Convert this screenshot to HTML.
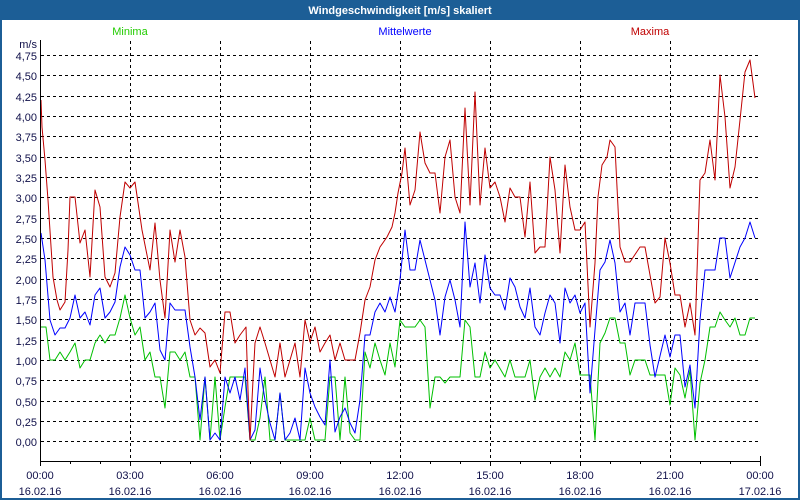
<!DOCTYPE html>
<html><head><meta charset="utf-8"><style>
html,body{margin:0;padding:0;width:800px;height:500px;overflow:hidden;background:#fff}
svg{display:block}
text{font-family:"Liberation Sans",sans-serif;font-size:11px}
</style></head><body>
<svg width="800" height="500" viewBox="0 0 800 500" xmlns="http://www.w3.org/2000/svg">
<rect x="0" y="0" width="800" height="500" fill="#1c5e96"/>
<rect x="2" y="20" width="796" height="478" fill="#fff"/>
<text x="400" y="14" text-anchor="middle" fill="#fff" font-weight="bold" style="font-size:11px">Windgeschwindigkeit [m/s] skaliert</text>
<text x="130" y="35" text-anchor="middle" fill="#22cc00">Minima</text>
<text x="405" y="35" text-anchor="middle" fill="#0000ff">Mittelwerte</text>
<text x="650" y="35" text-anchor="middle" fill="#c00000">Maxima</text>
<g fill="#10104a" text-anchor="end">
<text x="37" y="48">m/s</text>
<text x="37" y="60">4,75</text><text x="37" y="80">4,50</text><text x="37" y="101">4,25</text><text x="37" y="121">4,00</text>
<text x="37" y="141">3,75</text><text x="37" y="162">3,50</text><text x="37" y="182">3,25</text><text x="37" y="202">3,00</text>
<text x="37" y="223">2,75</text><text x="37" y="243">2,50</text><text x="37" y="263">2,25</text><text x="37" y="284">2,00</text>
<text x="37" y="304">1,75</text><text x="37" y="324">1,50</text><text x="37" y="345">1,25</text><text x="37" y="365">1,00</text>
<text x="37" y="385">0,75</text><text x="37" y="406">0,50</text><text x="37" y="426">0,25</text><text x="37" y="446">0,00</text>
</g>
<g stroke="#000" stroke-width="1" stroke-dasharray="3,3" shape-rendering="crispEdges">
<line x1="41" x2="760" y1="55.5" y2="55.5"/><line x1="41" x2="760" y1="75.5" y2="75.5"/><line x1="41" x2="760" y1="96.5" y2="96.5"/><line x1="41" x2="760" y1="116.5" y2="116.5"/>
<line x1="41" x2="760" y1="136.5" y2="136.5"/><line x1="41" x2="760" y1="157.5" y2="157.5"/><line x1="41" x2="760" y1="177.5" y2="177.5"/><line x1="41" x2="760" y1="197.5" y2="197.5"/>
<line x1="41" x2="760" y1="218.5" y2="218.5"/><line x1="41" x2="760" y1="238.5" y2="238.5"/><line x1="41" x2="760" y1="258.5" y2="258.5"/><line x1="41" x2="760" y1="279.5" y2="279.5"/>
<line x1="41" x2="760" y1="299.5" y2="299.5"/><line x1="41" x2="760" y1="319.5" y2="319.5"/><line x1="41" x2="760" y1="340.5" y2="340.5"/><line x1="41" x2="760" y1="360.5" y2="360.5"/>
<line x1="41" x2="760" y1="380.5" y2="380.5"/><line x1="41" x2="760" y1="401.5" y2="401.5"/><line x1="41" x2="760" y1="421.5" y2="421.5"/><line x1="41" x2="760" y1="441.5" y2="441.5"/>
<line y1="41" y2="461" x1="130.5" x2="130.5"/><line y1="41" y2="461" x1="220.5" x2="220.5"/><line y1="41" y2="461" x1="310.5" x2="310.5"/><line y1="41" y2="461" x1="400.5" x2="400.5"/>
<line y1="41" y2="461" x1="490.5" x2="490.5"/><line y1="41" y2="461" x1="580.5" x2="580.5"/><line y1="41" y2="461" x1="670.5" x2="670.5"/>
</g>
<g fill="none" stroke-width="1" stroke-linejoin="round">
<polyline stroke="#00c000" points="41,327 46,327 50,360 55,360 60,352 65,360 70,352 75,343 80,368 85,360 90,360 95,343 100,335 105,343 110,335 115,335 120,318 125,295 130,318 135,335 140,327 145,360 150,352 155,377 160,377 165,408 170,352 175,352 180,360 185,352 190,377 195,377 200,440 205,377 210,440 215,377 220,440 225,407 230,377 245,377 250,440 255,440 260,418 265,377 270,440 275,440 280,393 285,440 300,440 305,440 310,418 315,440 325,440 330,377 335,377 340,440 345,377 350,433 355,440 360,440 365,352 370,368 375,343 380,360 385,375 390,343 395,367 400,320 405,327 415,327 420,320 425,327 430,408 435,377 440,377 445,383 450,377 460,377 465,320 470,327 475,377 480,377 485,352 490,368 495,360 505,377 510,360 515,377 525,377 530,360 535,400 540,377 545,368 550,377 555,368 560,377 565,352 570,360 575,343 580,375 590,375 595,440 600,343 605,333 610,318 615,318 620,343 625,343 630,375 635,360 645,360 650,375 665,375 670,405 675,368 680,375 685,398 690,370 695,440 700,383 705,360 710,327 715,327 720,312 725,320 730,327 735,318 740,335 745,335 750,318 755,318"/>
<polyline stroke="#0000ff" points="41,233 45,260 50,320 55,335 60,328 65,328 70,318 75,295 80,318 85,312 90,325 95,295 100,288 105,318 110,312 115,302 120,267 125,247 130,255 135,270 140,270 145,318 150,312 155,303 160,350 165,360 170,303 175,310 185,310 190,347 195,377 200,420 205,377 210,440 215,433 220,440 225,377 230,393 235,377 240,400 245,368 250,440 255,430 260,368 265,400 270,423 275,440 280,393 285,440 290,433 295,418 300,440 305,368 310,393 315,407 320,417 325,425 330,360 335,432 340,417 345,408 350,423 355,433 360,400 365,335 370,335 375,312 380,303 385,312 390,297 395,312 400,280 405,230 410,270 415,270 420,240 425,260 430,280 435,300 440,335 445,297 450,280 455,300 460,327 465,222 470,287 475,263 480,303 485,255 490,288 495,295 500,295 505,310 510,278 515,287 520,307 525,318 530,288 535,327 540,335 545,313 550,295 555,303 560,343 565,288 570,303 575,295 580,313 585,303 590,393 595,330 600,270 605,262 610,240 615,263 620,312 625,303 630,335 635,303 645,303 650,345 655,377 665,335 670,357 675,335 680,335 685,387 690,365 695,408 700,320 705,270 715,270 720,238 725,238 730,278 740,247 745,238 750,222 755,238"/>
<polyline stroke="#c00000" points="41,100 42,127 45,160 48,200 53,277 57,300 60,310 65,302 68,250 70,197 75,197 80,243 85,230 90,277 95,190 100,207 105,277 110,287 115,273 120,217 125,182 130,188 135,182 142,230 150,270 155,223 160,280 165,318 170,230 175,262 180,230 185,257 190,320 195,335 200,328 205,333 210,367 215,360 220,373 225,312 230,312 235,343 240,335 246,327 248,390 250,440 253,380 255,343 260,327 265,343 270,360 275,377 280,343 285,377 290,360 295,343 300,377 305,320 310,342 315,327 320,352 325,343 330,335 335,360 340,343 345,360 355,360 360,333 365,300 370,287 375,260 380,247 387,237 392,227 395,213 398,193 402,173 405,148 410,205 415,190 420,132 425,163 430,173 435,173 440,213 445,157 450,140 455,197 460,213 465,108 470,205 475,92 480,205 485,148 490,188 495,182 500,197 505,222 510,188 515,197 520,197 525,237 530,182 535,253 540,247 545,247 550,157 555,190 560,253 565,165 570,207 575,230 580,230 585,222 590,327 595,263 598,197 602,165 607,157 610,140 615,147 620,247 625,262 630,262 640,247 645,247 655,303 660,297 665,238 670,263 675,295 680,295 685,327 690,303 695,335 700,180 705,173 710,140 715,180 720,75 725,117 730,188 735,167 740,120 745,72 750,60 755,98"/>
</g>
<g stroke="#000" stroke-width="1" shape-rendering="crispEdges">
<line x1="40.5" y1="40" x2="40.5" y2="462"/>
<line x1="40" y1="461.5" x2="761" y2="461.5"/>
<line x1="760.5" y1="456" x2="760.5" y2="466"/>
<line x1="40.5" y1="461" x2="40.5" y2="466"/>
<line x1="70.5" y1="461" x2="70.5" y2="464"/><line x1="100.5" y1="461" x2="100.5" y2="464"/><line x1="130.5" y1="461" x2="130.5" y2="466"/>
<line x1="160.5" y1="461" x2="160.5" y2="464"/><line x1="190.5" y1="461" x2="190.5" y2="464"/><line x1="220.5" y1="461" x2="220.5" y2="466"/>
<line x1="250.5" y1="461" x2="250.5" y2="464"/><line x1="280.5" y1="461" x2="280.5" y2="464"/><line x1="310.5" y1="461" x2="310.5" y2="466"/>
<line x1="340.5" y1="461" x2="340.5" y2="464"/><line x1="370.5" y1="461" x2="370.5" y2="464"/><line x1="400.5" y1="461" x2="400.5" y2="466"/>
<line x1="430.5" y1="461" x2="430.5" y2="464"/><line x1="460.5" y1="461" x2="460.5" y2="464"/><line x1="490.5" y1="461" x2="490.5" y2="466"/>
<line x1="520.5" y1="461" x2="520.5" y2="464"/><line x1="550.5" y1="461" x2="550.5" y2="464"/><line x1="580.5" y1="461" x2="580.5" y2="466"/>
<line x1="610.5" y1="461" x2="610.5" y2="464"/><line x1="640.5" y1="461" x2="640.5" y2="464"/><line x1="670.5" y1="461" x2="670.5" y2="466"/>
<line x1="700.5" y1="461" x2="700.5" y2="464"/><line x1="730.5" y1="461" x2="730.5" y2="464"/>
</g>
<g fill="#10104a" text-anchor="middle">
<text x="40" y="479">00:00</text><text x="40" y="495">16.02.16</text>
<text x="130" y="479">03:00</text><text x="130" y="495">16.02.16</text>
<text x="220" y="479">06:00</text><text x="220" y="495">16.02.16</text>
<text x="310" y="479">09:00</text><text x="310" y="495">16.02.16</text>
<text x="400" y="479">12:00</text><text x="400" y="495">16.02.16</text>
<text x="490" y="479">15:00</text><text x="490" y="495">16.02.16</text>
<text x="580" y="479">18:00</text><text x="580" y="495">16.02.16</text>
<text x="670" y="479">21:00</text><text x="670" y="495">16.02.16</text>
<text x="760" y="479">00:00</text><text x="760" y="495">17.02.16</text>
</g>
</svg>
</body></html>
